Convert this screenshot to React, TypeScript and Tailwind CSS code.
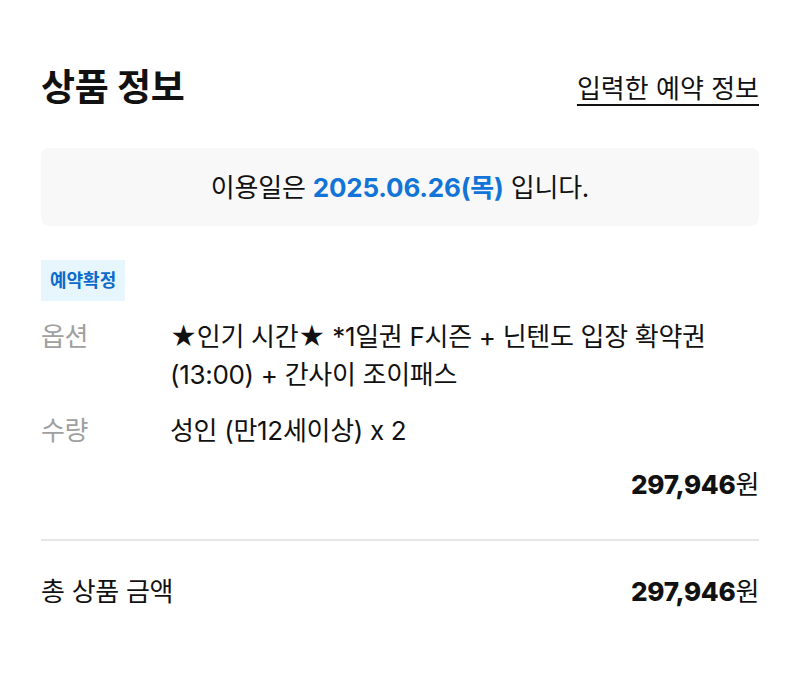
import React from "react";

export default function App() {
  return (
    <div
      className="w-[800px] h-[683px] bg-white px-[41px] pt-[62px] text-[#111]"
      style={{ fontFamily: 'Inter, "Noto Sans CJK KR", sans-serif' }}
    >
      <div className="flex items-center justify-between h-[52px]">
        <h1 className="text-[37px] font-bold tracking-[-0.3px]">상품 정보</h1>
        <a className="text-[26px] underline underline-offset-[6px] decoration-[2px] text-[#111]">입력한 예약 정보</a>
      </div>

      <div className="mt-[34px] h-[78px] rounded-[8px] bg-[#f8f8f8] flex items-center justify-center text-[26px] tracking-[-0.2px]">
        <span>
          이용일은 <span className="font-bold text-[#1274d6]">2025.06.26(목)</span> 입니다.
        </span>
      </div>

      <div className="mt-[34px]">
        <span className="inline-flex items-center h-[41px] px-[9px] bg-[#e7f5fd] text-[#0a6bcc] text-[18px] font-bold">
          예약확정
        </span>
      </div>

      <div className="mt-[17px] grid grid-cols-[129px_1fr] gap-y-[18px] text-[26px] leading-[38px] tracking-[-0.3px]">
        <div className="text-[#a0a0a0]">옵션</div>
        <div className="pr-[40px]">★인기 시간★ *1일권 F시즌 + 닌텐도 입장 확약권 (13:00) + 간사이 조이패스</div>
        <div className="text-[#a0a0a0]">수량</div>
        <div>성인 (만12세이상) x 2</div>
      </div>

      <div className="mt-[16px] flex justify-end text-[26px] leading-[38px] tracking-[-0.3px]">
        <span>
          <span className="font-extrabold">297,946</span>원
        </span>
      </div>

      <div className="mt-[35px] h-[2px] bg-[#e6e6e6]" />

      <div className="mt-[32px] flex items-center justify-between text-[26px] leading-[38px] tracking-[-0.3px]">
        <span>총 상품 금액</span>
        <span>
          <span className="font-extrabold">297,946</span>원
        </span>
      </div>
    </div>
  );
}
